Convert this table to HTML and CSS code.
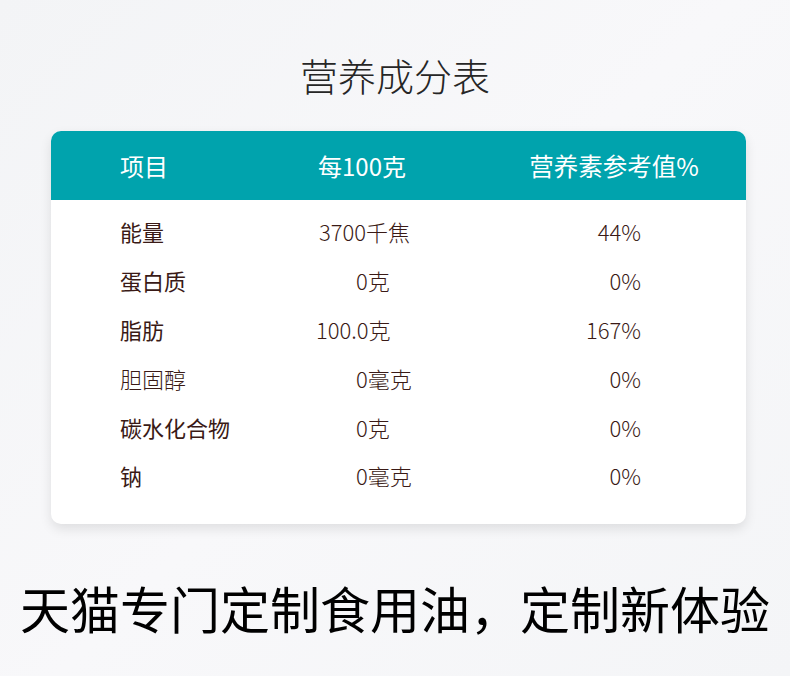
FILE: index.html
```html
<!DOCTYPE html>
<html lang="zh-CN">
<head>
<meta charset="utf-8">
<title>营养成分表</title>
<link rel="stylesheet" href="styles.css">
</head>
<body>
<div class="page">
  <h1 class="title">营养成分表</h1>
  <div class="card">
    <div class="head">
      <div class="h-name">项目</div>
      <div class="h-amount">每100克</div>
      <div class="h-ref">营养素参考值%</div>
    </div>
    <div class="body">
      <div class="row"><div class="name">能量</div><div class="amount shift-a">3700千焦</div><div class="ref">44%</div></div>
      <div class="row"><div class="name">蛋白质</div><div class="amount">0克</div><div class="ref">0%</div></div>
      <div class="row"><div class="name">脂肪</div><div class="amount shift-b">100.0克</div><div class="ref">167%</div></div>
      <div class="row"><div class="name light">胆固醇</div><div class="amount">0毫克</div><div class="ref">0%</div></div>
      <div class="row"><div class="name">碳水化合物</div><div class="amount">0克</div><div class="ref">0%</div></div>
      <div class="row"><div class="name">钠</div><div class="amount">0毫克</div><div class="ref">0%</div></div>
    </div>
  </div>
  <p class="slogan">天猫专门定制食用油，定制新体验</p>
</div>
</body>
</html>
```
FILE: styles.css
```css
html, body {
  margin: 0;
  padding: 0;
}
body {
  width: 790px;
  height: 676px;
  overflow: hidden;
  background: linear-gradient(135deg, #f3f4f6 0%, #f8f8fa 50%, #f4f5f7 100%);
  font-family: "Noto Sans CJK SC", "Noto Sans", sans-serif;
}
.page {
  padding-top: 50px;
}
.title {
  margin: 0;
  height: 50px;
  line-height: 50px;
  text-align: center;
  font-size: 38px;
  font-weight: 300;
  color: #262626;
}
.card {
  margin: 31px 0 0 51px;
  width: 695px;
  height: 393px;
  background: #fff;
  border-radius: 10px;
  overflow: hidden;
  box-shadow: 0 5px 12px rgba(0, 0, 0, 0.10);
}
.head {
  height: 69px;
  background: #00a3ad;
  display: grid;
  grid-template-columns: 180px 124px 1fr;
  align-items: center;
  padding-left: 69px;
  color: #fff;
  font-size: 24px;
  font-weight: 400;
}
.h-amount {
  text-align: center;
}
.h-ref {
  padding-left: 58px;
  text-align: center;
  font-size: 24.5px;
}
.body {
  padding-top: 7px;
}
.row {
  height: 48.8px;
  display: grid;
  grid-template-columns: 236px 150px 135px;
  align-items: center;
  padding-left: 69px;
  font-size: 22px;
  color: #3a1a16;
}
.name {
  font-weight: 400;
}
.name.light {
  font-weight: 300;
}
.amount {
  font-weight: 300;
  white-space: nowrap;
}
.shift-a {
  margin-left: -37px;
}
.shift-b {
  margin-left: -40px;
}
.ref {
  font-weight: 300;
  text-align: right;
}
.slogan {
  margin: 53px 0 0;
  height: 60px;
  line-height: 60px;
  text-align: center;
  font-size: 50px;
  font-weight: 400;
  color: #000;
}
```
